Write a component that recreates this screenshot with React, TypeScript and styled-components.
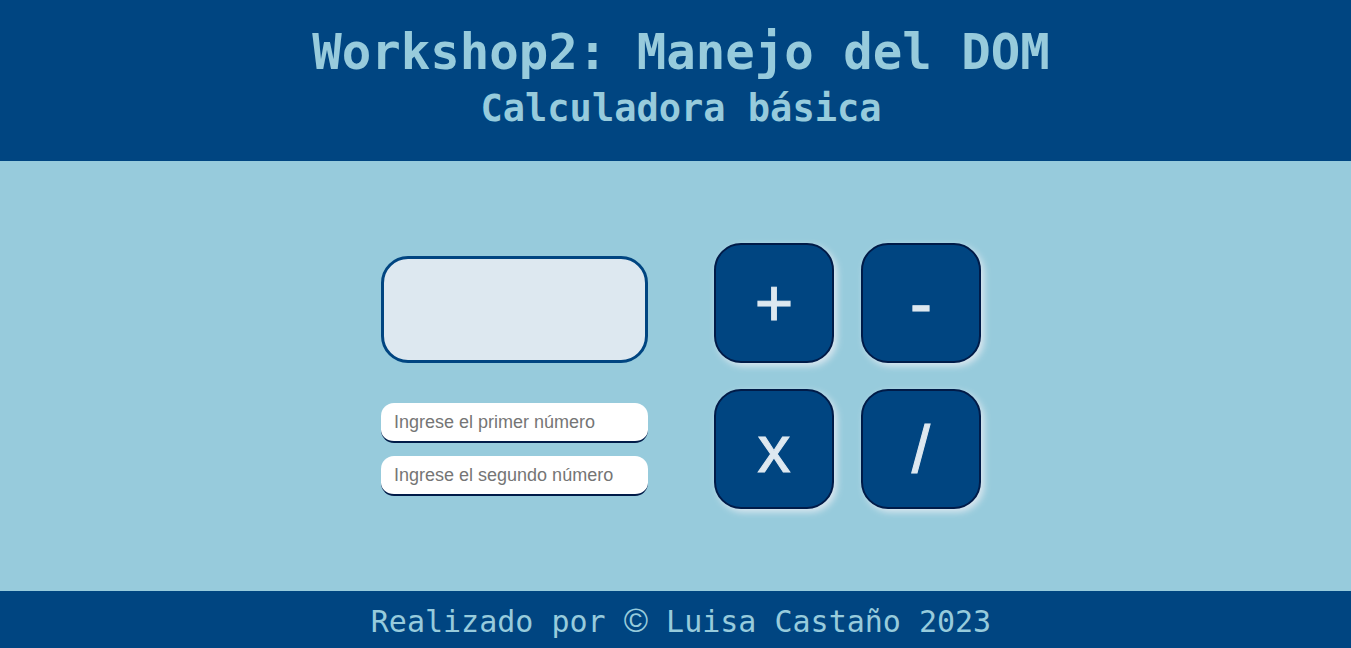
import React, { useState } from 'react';
import styled, { createGlobalStyle } from 'styled-components';

const color = {
  navy: '#001b48',
  blue: '#004581',
  sky: '#97cbdc',
  mist: '#dde8f0',
};

const GlobalStyle = createGlobalStyle`
  *, *::before, *::after { box-sizing: border-box; }
  body {
    margin: 0;
    background: ${color.sky};
    font-family: 'Liberation Sans', Arial, sans-serif;
  }
`;

const Page = styled.div`
  display: flex;
  flex-direction: column;
  min-height: 100vh;
`;

const Header = styled.header`
  display: flex;
  flex-direction: column;
  align-items: center;
  padding: 21px 0 29px 11px;
  background: ${color.blue};
  color: ${color.sky};
  font-family: 'DejaVu Sans Mono', monospace;
  text-align: center;
`;

const Title = styled.h1`
  margin: 0;
  font-size: 49px;
  line-height: 64px;
  font-weight: 700;
`;

const Subtitle = styled.h2`
  margin: 0;
  font-size: 37px;
  line-height: 47px;
  font-weight: 700;
`;

const Main = styled.main`
  flex: 1;
  display: flex;
  flex-wrap: wrap;
  align-items: center;
  justify-content: center;
  gap: 40px 66px;
  padding: 40px 0 40px 11px;
`;

const Panel = styled.div`
  display: flex;
  flex-direction: column;
  gap: 13px;
  width: 267px;
`;

const Result = styled.output`
  display: flex;
  align-items: center;
  justify-content: center;
  height: 107px;
  margin-bottom: 27px;
  border: 3px solid ${color.blue};
  border-radius: 27px;
  background: ${color.mist};
  color: ${color.blue};
  font-size: 40px;
  overflow: hidden;
`;

const NumberField = styled.input`
  width: 100%;
  height: 40px;
  padding: 0 13px;
  border: 0;
  border-bottom: 2px solid ${color.navy};
  border-radius: 13px;
  background: #fff;
  color: ${color.navy};
  font-family: inherit;
  font-size: 18px;
  outline: none;
  &::placeholder { color: #757575; opacity: 1; }
`;

const Keypad = styled.div`
  display: grid;
  grid-template-columns: repeat(2, 120px);
  grid-auto-rows: 120px;
  gap: 26px 27px;
`;

const Key = styled.button`
  padding: 0;
  border: 2px solid ${color.navy};
  border-radius: 27px;
  background: ${color.blue};
  box-shadow: 3px 3px 7px ${color.mist};
  color: ${color.mist};
  font-family: inherit;
  font-size: 66px;
  line-height: 76px;
  -webkit-text-stroke: 1px ${color.mist};
  cursor: pointer;
`;

const Footer = styled.footer`
  padding: 11px 0 6px 11px;
  background: ${color.blue};
  color: ${color.sky};
  font-family: 'DejaVu Sans Mono', monospace;
  font-size: 30px;
  line-height: 40px;
  text-align: center;
`;

const Copyright = styled.span`
  font-family: 'Liberation Sans', Arial, sans-serif;
  font-size: 33px;
  line-height: 1;
`;

const operations: { sign: string; name: string; run: (a: number, b: number) => number }[] = [
  { sign: '+', name: 'Sumar', run: (a, b) => a + b },
  { sign: '-', name: 'Restar', run: (a, b) => a - b },
  { sign: 'x', name: 'Multiplicar', run: (a, b) => a * b },
  { sign: '/', name: 'Dividir', run: (a, b) => a / b },
];

export default function App() {
  const [first, setFirst] = useState('');
  const [second, setSecond] = useState('');
  const [result, setResult] = useState('');

  return (
    <>
      <GlobalStyle />
      <Page>
        <Header>
          <Title>Workshop2: Manejo del DOM</Title>
          <Subtitle>Calculadora básica</Subtitle>
        </Header>
        <Main>
          <Panel>
            <Result htmlFor="first second">{result}</Result>
            <NumberField
              id="first"
              inputMode="decimal"
              aria-label="Ingrese el primer número"
              placeholder="Ingrese el primer número"
              value={first}
              onChange={(e) => setFirst(e.target.value)}
            />
            <NumberField
              id="second"
              inputMode="decimal"
              aria-label="Ingrese el segundo número"
              placeholder="Ingrese el segundo número"
              value={second}
              onChange={(e) => setSecond(e.target.value)}
            />
          </Panel>
          <Keypad>
            {operations.map(({ sign, name, run }) => (
              <Key
                key={sign}
                type="button"
                title={name}
                onClick={() => setResult(String(run(Number(first), Number(second))))}
              >
                {sign}
              </Key>
            ))}
          </Keypad>
        </Main>
        <Footer>
          Realizado por <Copyright>©</Copyright> Luisa Castaño 2023
        </Footer>
      </Page>
    </>
  );
}
